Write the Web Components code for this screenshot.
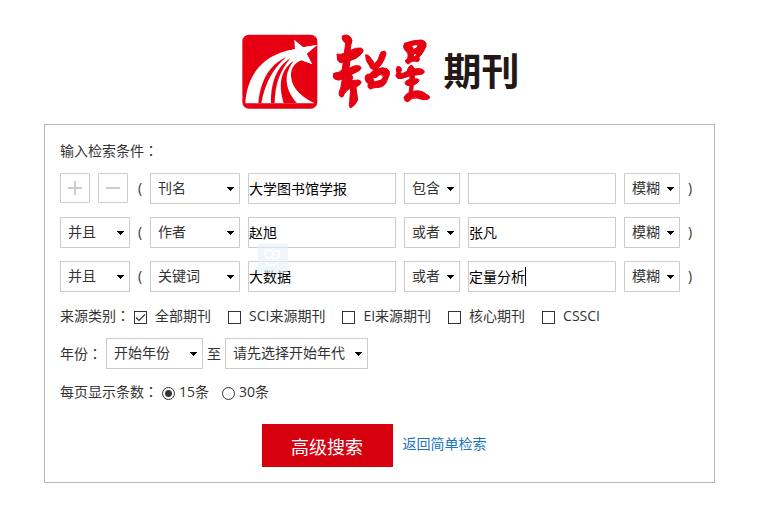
<!DOCTYPE html>
<html lang="zh-CN">
<head>
<meta charset="utf-8">
<title>超星期刊 高级搜索</title>
<style>
body{margin:0;background:#fff;color:#333;font:14px/20px "Open Sans","Noto Sans CJK SC",sans-serif}
</style>
</head>
<body>
<journal-search></journal-search>
<script>
const define = (name, html, setup) => customElements.define(name, class extends HTMLElement {
  constructor() {
    super();
    const t = document.createElement('template');
    t.innerHTML = html;
    this.attachShadow({mode: 'open'}).append(t.content.cloneNode(true));
    if (setup) setup(this, this.shadowRoot);
  }
});

define('site-logo', `
<style>
:host{display:flex;justify-content:center;align-items:center;height:86px}
svg{display:block;flex:none}
span{font:bold 38px/56px "Noto Sans CJK SC",sans-serif;color:#231815;margin-left:8px;padding-bottom:4px}
</style>
<svg width="90" height="86" viewBox="0 0 270 258" role="img" aria-label="logo">
 <rect x="22" y="20" width="225" height="222" rx="20" fill="#e60012"/>
 <path fill="#fff" d="M31 226C35 158 66 93 153 69L180 64L178 36L204 58L246 51L215 77L231 108L199 97C180 105 167 120 168 145C171 184 201 207 238 226Z"/>
 <path fill="#e60012" d="M70 226C76 158 102 111 155 86C116 119 90 162 79 226ZM108 226C107 167 123 118 166 91C135 129 120 168 119 226ZM146 226C129 166 137 125 178 97C148 132 144 178 186 226Z"/>
 <path fill="#fff" d="M178 36L204 58L246 51L215 77L231 108L198 95L173 101L166 84L153 69L184 62Z"/>
</svg>
<svg width="110" height="86" viewBox="0 0 330 258" role="img" aria-label="超星" fill="#e60012" stroke="#e60012" stroke-width="3" stroke-linejoin="round">
 <path d="M51 25Q65 16 76 27Q85 37 78 49L75 68Q91 58 108 60Q121 65 108 79Q96 92 75 98L72 121Q91 109 104 114Q113 120 102 128L79 140Q88 149 79 158L101 156Q113 160 105 169L93 178L98 216Q89 235 78 239Q70 239 74 221L77 181Q61 187 54 206Q43 210 42 195Q49 178 52 153Q41 160 29 153Q22 149 26 136Q45 134 51 126L55 103Q43 107 38 96L36 78Q47 81 58 76L62 45Q51 40 51 25Z"/>
 <path fill-rule="evenodd" d="M122 80Q130 79 137 90Q146 100 148 108Q161 98 164 81Q166 69 178 69Q186 72 181 84Q173 110 155 124Q173 115 186 122Q197 130 193 140L185 160Q179 176 163 178Q144 178 137 183Q126 181 130 167Q118 160 121 145Q124 137 134 138L147 125Q134 123 133 112Q121 98 122 80ZM142 147L148 162L169 156Q177 147 174 142Q164 136 157 146Q149 153 142 147Z"/>
 <path fill-rule="evenodd" d="M238 46Q265 36 289 36Q306 39 303 55Q293 78 282 88Q286 99 278 101Q261 96 253 106Q246 112 241 98L248 91Q253 75 240 67Q233 58 238 46ZM259 54Q266 59 264 65L275 60L280 51Q270 48 259 54ZM266 79L264 88L273 83L275 75Z"/>
 <path d="M218 115Q228 115 230 125L225 136Q236 138 247 129Q250 112 261 112L269 123Q281 119 292 124Q304 132 292 138L268 142L268 153Q282 150 282 158Q278 167 265 171L263 190Q288 184 304 199Q319 205 311 213Q294 218 276 210Q261 207 249 221Q239 222 237 209Q240 199 252 194L255 173Q240 173 240 164Q243 156 255 154L254 143Q231 154 218 151Q208 144 216 135Q210 122 218 115Z"/>
</svg>
<span>期刊</span>`);

define('drop-down', `
<style>
:host{display:block;min-width:0}
select{appearance:none;box-sizing:border-box;display:block;width:100%;height:31px;margin:0;padding:0 14px 1px 7px;border:1px solid #ccc;border-radius:0;font:inherit;color:#333;
background:#fff url("data:image/svg+xml,%3Csvg xmlns='http://www.w3.org/2000/svg' width='8' height='5' shape-rendering='crispEdges'%3E%3Cpath d='M0 0h8L4 4z'/%3E%3C/svg%3E") no-repeat right 5px top 13px}
</style><select><option></option></select>`, (el, root) => {
  root.querySelector('option').textContent = el.getAttribute('value');
  root.querySelector('select').setAttribute('aria-label', el.getAttribute('label'));
});

define('text-field', `
<style>
:host{display:block;position:relative;min-width:0}
input{box-sizing:border-box;display:block;width:100%;height:31px;margin:0;padding:0 0 2px;border:1px solid #ccc;border-radius:0;background:#fff;color:#000;font:inherit;outline:0}
i{display:none;position:absolute;left:57px;top:6px;width:1px;height:19px;background:#000}
:host([caret]) i{display:block}
</style><input type="text"><i></i>`, (el, root) => {
  const input = root.querySelector('input');
  input.value = el.getAttribute('value') || '';
  input.setAttribute('aria-label', el.getAttribute('label'));
});

define('step-button', `
<style>
:host{display:block}
button{box-sizing:border-box;display:grid;place-items:center;width:30px;height:30px;padding:0;border:1px solid #ccc;border-radius:1px;background:#fff}
path{stroke:#ccc;stroke-width:2}
</style><button type="button"><svg width="14" height="14"><path/></svg></button>`, (el, root) => {
  const add = el.getAttribute('kind') === 'add';
  root.querySelector('path').setAttribute('d', add ? 'M0 7H14M7 0V14' : 'M0 7H14');
  root.querySelector('button').setAttribute('aria-label', add ? '增加条件' : '减少条件');
});

/* Builds one bracketed condition from its attributes. */
class SearchCondition extends HTMLElement {
  constructor() {
    super();
    const v = n => this.getAttribute(n) || '';
    this.attachShadow({mode: 'open'}).innerHTML = `
<style>
:host{display:grid;grid-template-columns:70px 4px 90px 1fr 56px 1fr 56px 11px;gap:8px}
.lead{display:flex;gap:8px}
.lead drop-down{flex:1}
span{line-height:30px}
</style>
<div class="lead">${v('join') ? `<drop-down value="${v('join')}" label="逻辑"></drop-down>` : '<step-button kind="add"></step-button><step-button kind="remove"></step-button>'}</div>
<span>(</span>
<drop-down value="${v('field')}" label="字段"></drop-down>
<text-field value="${v('first')}" label="检索词"></text-field>
<drop-down value="${v('relation')}" label="关系"></drop-down>
<text-field value="${v('second')}" label="第二检索词" ${this.hasAttribute('caret') ? 'caret' : ''}></text-field>
<drop-down value="模糊" label="匹配"></drop-down>
<span>)</span>`;
  }
}
customElements.define('search-condition', SearchCondition);

define('choice-box', `
<style>
:host{display:block}
label{display:flex;align-items:center;gap:8px}
:host([type=radio]) label{gap:4px}
input{appearance:none;box-sizing:border-box;width:13px;height:13px;margin:3px 0 0;border:1px solid #333;background:#fff;flex:none}
input[type=radio]{border-radius:50%}
input[type=radio]:checked{background:radial-gradient(circle,#333 0 3px,#fff 4px)}
input[type=checkbox]:checked{background:#fff url("data:image/svg+xml,%3Csvg xmlns='http://www.w3.org/2000/svg' width='11' height='11'%3E%3Cpath d='M1 5.5L4 8.5L10 2.5' fill='none' stroke='%23333' stroke-width='1.2'/%3E%3C/svg%3E")}
</style><label><input><span><slot></slot></span></label>`, (el, root) => {
  const input = root.querySelector('input');
  input.type = el.getAttribute('type');
  input.name = el.getAttribute('name');
  input.checked = el.hasAttribute('checked');
});

define('form-line', `
<style>
:host{display:flex;align-items:center;gap:4px}
.colon{font-family:"Noto Sans CJK TC",sans-serif;line-height:1}
</style><span><slot name="label"></slot><span class="colon" lang="zh-Hant">：</span></span><slot></slot>`);

define('capture-mark', `
<style>
:host{position:absolute;left:213px;top:118px;width:30px;height:30px;border-radius:3px;background:#e5f2fd;opacity:.6;pointer-events:none}
svg{display:block}
</style><svg width="30" height="30" fill="none" stroke="#fff" stroke-width="2"><circle cx="11" cy="11" r="4"/><path d="M14 14l3 3M17 8h4v6l-3 2M9 19v3h8l3-3"/></svg>`);

define('journal-search', `
<style>
:host{display:block;padding:28px 43px 46px 44px}
site-logo{padding-right:4px}
form{position:relative;display:flex;flex-direction:column;margin:10px 0 0;padding:16px 15px 15px;border:1px solid #b5b5b5}
.rows{display:grid;gap:13px;margin:12px 0 14px}
.sources,.pages{display:flex}
.sources{gap:17px}
.pages{gap:13px}
.year{margin:12px 0 13px}
.start{width:97px}.end{width:143px}
.actions{display:flex;justify-content:center;gap:10px;margin-top:22px;padding-right:11px}
button{height:43px;padding:2px 29px 0;border:0;background:#d7000f;color:#fff;font:inherit;font-size:18px;width:131px}
a{color:#1b74bd;text-decoration:none;line-height:40px}
</style>
<site-logo></site-logo>
<form>
 <form-line><span slot="label">输入检索条件</span></form-line>
 <div class="rows">
  <search-condition field="刊名" first="大学图书馆学报" relation="包含"></search-condition>
  <search-condition join="并且" field="作者" first="赵旭" relation="或者" second="张凡"></search-condition>
  <search-condition join="并且" field="关键词" first="大数据" relation="或者" second="定量分析" caret></search-condition>
 </div>
 <form-line><span slot="label">来源类别</span><div class="sources">
  <choice-box type="checkbox" name="source" checked>全部期刊</choice-box>
  <choice-box type="checkbox" name="source">SCI来源期刊</choice-box>
  <choice-box type="checkbox" name="source">EI来源期刊</choice-box>
  <choice-box type="checkbox" name="source">核心期刊</choice-box>
  <choice-box type="checkbox" name="source">CSSCI</choice-box>
 </div></form-line>
 <form-line class="year"><span slot="label">年份</span>
  <drop-down class="start" value="开始年份" label="开始年份"></drop-down><span>至</span>
  <drop-down class="end" value="请先选择开始年代" label="结束年份"></drop-down></form-line>
 <form-line><span slot="label">每页显示条数</span><div class="pages">
  <choice-box type="radio" name="size" checked>15条</choice-box>
  <choice-box type="radio" name="size">30条</choice-box>
 </div></form-line>
 <div class="actions"><button type="button">高级搜索</button><a href="#">返回简单检索</a></div>
 <capture-mark></capture-mark>
</form>`);
</script>
</body>
</html>
